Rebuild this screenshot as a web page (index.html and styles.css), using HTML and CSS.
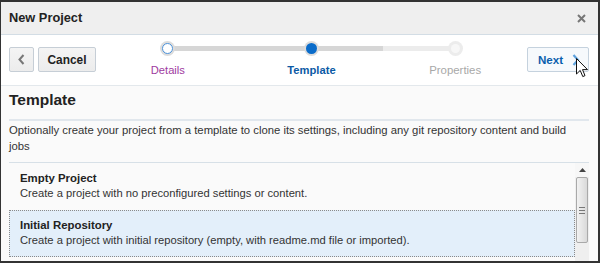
FILE: index.html
```html
<!DOCTYPE html>
<html lang="en">
<head>
    <meta charset="UTF-8">
    <meta name="viewport" content="width=device-width, initial-scale=1.0">
    <title>New Project</title>
    <link rel="stylesheet" href="styles.css">
</head>
<body>
    <div class="dialog">
        <div class="dialog-header">
            <span class="dialog-title">New Project</span>
            <svg class="close-icon" width="9" height="9" viewBox="0 0 9 9">
                <path d="M1 1 L8 8 M8 1 L1 8" stroke="#777" stroke-width="2" fill="none"/>
            </svg>
        </div>

        <div class="nav">
            <button class="btn btn-back">
                <svg width="7" height="11" viewBox="0 0 7 11">
                    <polyline points="5.5,1 1.5,5.5 5.5,10" stroke="#777" stroke-width="2" fill="none"/>
                </svg>
            </button>
            <button class="btn btn-cancel">Cancel</button>

            <div class="train">
                <div class="step step-visited">
                    <span class="dot"></span>
                    <span class="step-label">Details</span>
                </div>
                <div class="step step-current">
                    <span class="dot"></span>
                    <span class="step-label">Template</span>
                </div>
                <div class="step step-disabled">
                    <span class="dot"></span>
                    <span class="step-label">Properties</span>
                </div>
            </div>

            <button class="btn btn-next">Next
                <svg width="8" height="12" viewBox="0 0 8 12">
                    <polyline points="1.5,1 6,6 1.5,11" stroke="#5ea2de" stroke-width="2.2" fill="none"/>
                </svg>
            </button>

            <svg class="cursor" width="13" height="20" viewBox="0 0 13 20">
                <path d="M0.5 0.5 L0.5 16 L4.2 12.4 L6.8 18.6 L9 17.6 L6.5 11.6 L11.5 11.6 Z" fill="#fff" stroke="#111" stroke-width="1"/>
            </svg>
        </div>

        <div class="content">
            <h2 class="section-title">Template</h2>
            <p class="intro">Optionally create your project from a template to clone its settings, including any git repository content and build jobs</p>

            <div class="list">
                <div class="items">
                    <div class="item">
                        <div class="item-title">Empty Project</div>
                        <div class="item-desc">Create a project with no preconfigured settings or content.</div>
                    </div>
                    <div class="item item-selected">
                        <div class="item-title">Initial Repository</div>
                        <div class="item-desc">Create a project with initial repository (empty, with readme.md file or imported).</div>
                    </div>
                </div>
                <div class="scrollbar">
                    <div class="scroll-up">
                        <svg width="7" height="4" viewBox="0 0 7 4"><polygon points="0,4 3.5,0 7,4" fill="#444"/></svg>
                    </div>
                    <div class="scroll-thumb">
                        <span class="grip"></span>
                    </div>
                </div>
            </div>
        </div>
    </div>
</body>
</html>
```

FILE: styles.css
```css
html, body {
    margin: 0;
    padding: 0;
}
body {
    width: 600px;
    height: 263px;
    overflow: hidden;
    font-family: "Liberation Sans", Arial, sans-serif;
    color: #333;
    background-color: #fff;
}
.dialog {
    box-sizing: border-box;
    width: 600px;
    height: 263px;
    border: 2px solid #333;
    border-left-width: 1px;
    background-color: #fafafa;
    display: flex;
    flex-direction: column;
    overflow: hidden;
}
.dialog-header {
    height: 32px;
    flex: none;
    display: flex;
    align-items: center;
    justify-content: space-between;
    padding: 0 12px 0 8px;
    background-color: #efefef;
    border-bottom: 1px solid #d3dde5;
}
.dialog-title {
    font-size: 12.8px;
    font-weight: bold;
    color: #222;
    margin-top: -1px;
}
.close-icon {
    display: block;
}
.nav {
    box-sizing: border-box;
    position: relative;
    height: 51px;
    flex: none;
    display: flex;
    align-items: flex-start;
    padding: 6px 9px 0 8px;
    background-color: #fff;
    border-bottom: 1px solid #e3e8ec;
}
.btn {
    box-sizing: border-box;
    height: 25px;
    margin-top: 6px;
    padding: 0;
    border: 1px solid #c6ced6;
    border-radius: 2px;
    background: linear-gradient(#f4f4f4, #ececec);
    font-family: "Liberation Sans", Arial, sans-serif;
    font-size: 11.9px;
    font-weight: bold;
    color: #222;
    display: flex;
    align-items: center;
    justify-content: center;
}
.btn-back {
    width: 25px;
    margin-right: 4px;
}
.btn-cancel {
    width: 58px;
}
.btn-next {
    width: 62px;
    justify-content: flex-start;
    padding-left: 10px;
    gap: 9px;
    background: #f6f9fc;
    border-color: #c5d2de;
    color: #0b5fad;
    font-size: 11.6px;
}
.train {
    flex: 1;
    display: flex;
}
.step {
    flex: 1;
    position: relative;
    display: flex;
    flex-direction: column;
    align-items: center;
}
.step::before,
.step::after {
    content: "";
    position: absolute;
    top: 5px;
    height: 5px;
    width: 50%;
    background-color: #d6d6d6;
}
.step::before {
    left: 0;
}
.step::after {
    left: 50%;
}
.step-visited::before,
.step-disabled::after {
    display: none;
}
.step-disabled::before {
    background-color: #ececec;
}
.dot {
    position: relative;
    z-index: 1;
    width: 15px;
    height: 15px;
    border-radius: 50%;
    background-color: #dcdcdc;
    display: flex;
    align-items: center;
    justify-content: center;
}
.dot::after {
    content: "";
    border-radius: 50%;
}
.step-visited .dot::after {
    box-sizing: border-box;
    width: 11px;
    height: 11px;
    background-color: #fff;
    border: 1.5px solid #4c93db;
}
.step-current .dot::after {
    width: 11px;
    height: 11px;
    background-color: #0a6cca;
}
.step-disabled .dot {
    background-color: #ececec;
}
.step-disabled .dot::after {
    width: 9px;
    height: 9px;
    background-color: #f7f7f7;
}
.step-label {
    margin-top: 7px;
    font-size: 11.2px;
    line-height: 14px;
}
.step-visited .step-label {
    color: #9e3aa0;
}
.step-current .step-label {
    color: #0b5aa5;
    font-weight: bold;
}
.step-disabled .step-label {
    color: #a8a8a8;
    font-size: 11.4px;
}
.cursor {
    position: absolute;
    left: 575px;
    top: 23px;
}
.content {
    flex: 1;
    display: flex;
    flex-direction: column;
    padding: 0 9px 0 8px;
    min-height: 0;
}
.section-title {
    margin: 0;
    padding: 4px 0 9px;
    font-size: 15.5px;
    line-height: 20px;
    color: #222;
    border-bottom: 2px solid #e1e7ed;
}
.intro {
    margin: 0;
    padding: 1px 0 8px;
    font-size: 11.3px;
    line-height: 16px;
    color: #333;
    border-bottom: 1px solid #d7e0e7;
}
.list {
    flex: 1;
    display: flex;
    min-height: 0;
    overflow: hidden;
}
.items {
    flex: 1;
}
.item {
    padding: 7px 10px 8px;
    border: 1px solid transparent;
}
.item-selected {
    background-color: #e3effa;
    border: 1px dotted #8a8a8a;
}
.item-title {
    font-size: 11.4px;
    font-weight: bold;
    line-height: 15px;
    color: #222;
}
.item-desc {
    font-size: 11.2px;
    line-height: 15px;
    color: #333;
}
.scrollbar {
    width: 14px;
    display: flex;
    flex-direction: column;
    align-items: center;
    background-color: #efefef;
}
.scroll-up {
    width: 14px;
    height: 14px;
    display: flex;
    align-items: center;
    justify-content: center;
    background-color: #f7f7f7;
}
.scroll-thumb {
    box-sizing: border-box;
    width: 12px;
    height: 66px;
    border: 1px solid #a9a9a9;
    border-radius: 2px;
    background: linear-gradient(to right, #f2f2f2, #d9d9d9);
    display: flex;
    align-items: center;
    justify-content: center;
}
.grip {
    width: 6px;
    height: 5px;
    border-top: 1px solid #777;
    border-bottom: 1px solid #777;
    background: linear-gradient(#777, #777) center / 6px 1px no-repeat;
}
```
